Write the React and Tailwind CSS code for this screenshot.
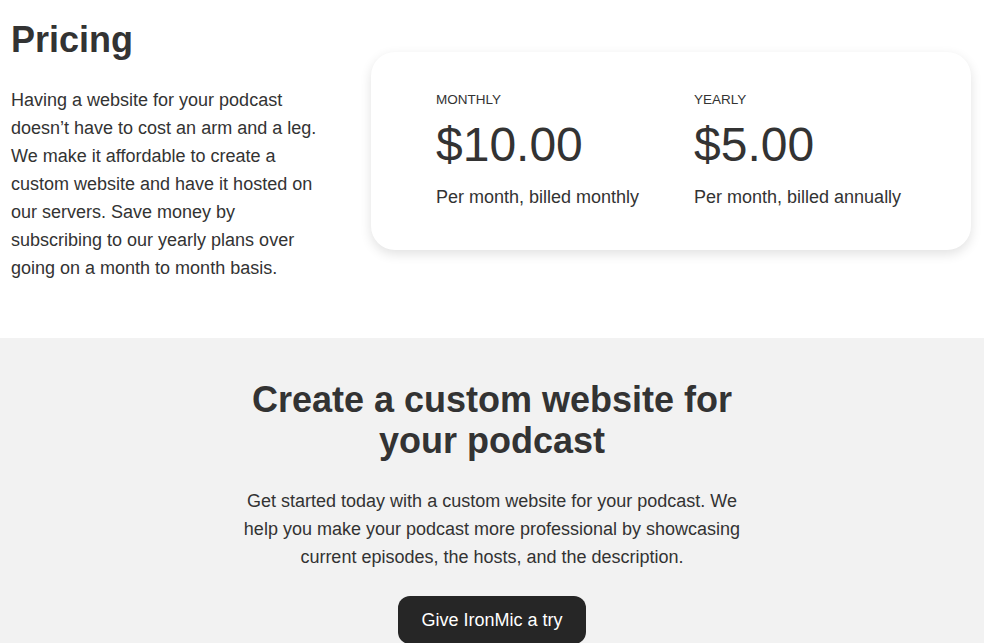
import React from 'react';

const plans = [
  { label: 'MONTHLY', price: '$10.00', note: 'Per month, billed monthly' },
  { label: 'YEARLY', price: '$5.00', note: 'Per month, billed annually' },
];

export default function App() {
  return (
    <div className="min-h-screen bg-white text-[#333333] font-['Liberation_Sans',Arial,sans-serif]">

      {/* -- pricing -- */}
      <section className="px-[11px] pt-[18px] pb-[56px]">
        <h1 className="text-[36px] font-bold leading-[44px]">Pricing</h1>

        <div className="flex items-start gap-[40px] mt-[24px]">
          <p className="w-[320px] shrink-0 text-[18px] leading-[28px]">
            Having a website for your podcast doesn’t have to cost an arm and a leg.
            We make it affordable to create a custom website and have it hosted on
            our servers. Save money by subscribing to our yearly plans over going on
            a month to month basis.
          </p>

          <div className="-mt-[34px] w-[600px] rounded-[24px] bg-white pl-[65px] pt-[40px] pb-[41px] shadow-[0_4px_12px_rgba(0,0,0,0.12)]">
            <div className="flex">
              {plans.map(p => (
                <div key={p.label} className="w-[258px]">
                  <div className="text-[13.5px] leading-[16px]">{p.label}</div>
                  <div className="text-[48px] leading-[56px] mt-[9px]">{p.price}</div>
                  <div className="text-[18px] leading-[24px] mt-[12px]">{p.note}</div>
                </div>
              ))}
            </div>
          </div>
        </div>
      </section>

      {/* -- call to action -- */}
      <section className="bg-[#f2f2f2] pt-[41px] pb-[40px] flex flex-col items-center text-center">
        <h2 className="max-w-[520px] text-[36px] font-bold leading-[41px]">
          Create a custom website for your podcast
        </h2>
        <p className="max-w-[520px] mt-[26px] text-[18px] leading-[28px]">
          Get started today with a custom website for your podcast. We help you make
          your podcast more professional by showcasing current episodes, the hosts,
          and the description.
        </p>
        <button className="mt-[25px] h-[48px] px-[23px] rounded-[12px] bg-[#262626] text-white text-[18px]">
          Give IronMic a try
        </button>
      </section>
    </div>
  );
}
